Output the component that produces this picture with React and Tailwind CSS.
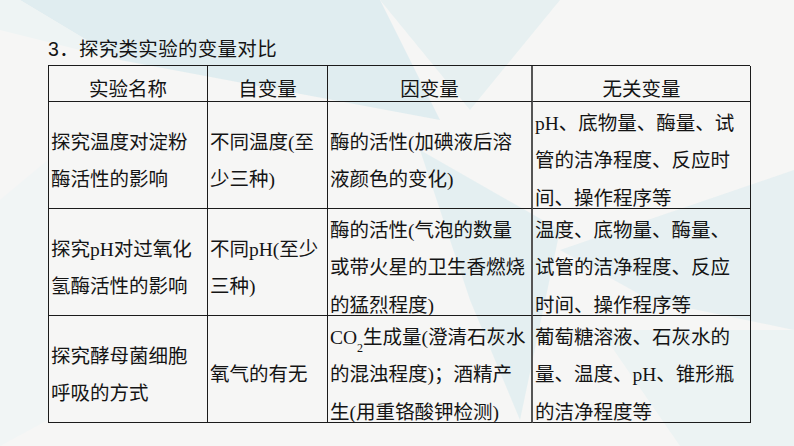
import React from 'react';

const serif = { fontFamily: '"Liberation Serif", "Noto Sans CJK SC", serif' };

const rows = [
  {
    name: ['探究温度对淀粉', '酶活性的影响'],
    iv: ['不同温度(至', '少三种)'],
    dv: ['酶的活性(加碘液后溶', '液颜色的变化)'],
    cv: ['pH、底物量、酶量、试', '管的洁净程度、反应时', '间、操作程序等'],
  },
  {
    name: ['探究pH对过氧化', '氢酶活性的影响'],
    iv: ['不同pH(至少', '三种)'],
    dv: ['酶的活性(气泡的数量', '或带火星的卫生香燃烧', '的猛烈程度)'],
    cv: ['温度、底物量、酶量、', '试管的洁净程度、反应', '时间、操作程序等'],
  },
  {
    name: ['探究酵母菌细胞', '呼吸的方式'],
    iv: ['氧气的有无'],
    dv: [
      <>CO<sub className="text-[12px] align-[-5px]">2</sub>生成量(澄清石灰水</>,
      '的混浊程度)；酒精产',
      '生(用重铬酸钾检测)',
    ],
    cv: ['葡萄糖溶液、石灰水的', '量、温度、pH、锥形瓶', '的洁净程度等'],
  },
];

function Cell({ lines, className = '' }) {
  return (
    <div className={`h-[107px] flex items-center pt-[12px] pl-[2px] border-b border-[#1b1b1b] whitespace-nowrap ${className}`}>
      <div className="leading-[37.5px]">
        {lines.map((l, i) => (
          <div key={i}>{l}</div>
        ))}
      </div>
    </div>
  );
}

function Background() {
  return (
    <svg className="absolute inset-0" width="794" height="446" viewBox="0 0 794 446">
      <rect width="794" height="446" fill="#f6f6f5" />
      <polygon points="20,0 380,0 440,120 120,60" fill="#dcebee" opacity="0.85" />
      <polygon points="0,0 20,0 120,60 0,30" fill="#eef4f4" />
      <polygon points="380,0 560,0 470,110" fill="#e7f0f1" />
      <polygon points="420,150 560,230 520,420 470,300" fill="#e0eef0" opacity="0.8" />
      <polygon points="560,250 794,170 794,330 650,300" fill="#e2eef0" opacity="0.75" />
      <polygon points="600,330 794,330 794,446 680,446" fill="#ecf3f3" />
      <polygon points="0,200 48,160 48,420 0,446" fill="#f1f5f5" />
    </svg>
  );
}

export default function App() {
  return (
    <div className="relative w-[794px] h-[446px] overflow-hidden text-[#141414]">
      <Background />
      <div className="relative pl-[48px] pt-[37px]">
        <div
          className="text-[19.5px] leading-[24px] tracking-[0.3px] mb-[4px]"
          style={{ fontFamily: '"Liberation Sans", "Noto Sans CJK SC", sans-serif' }}
        >
          3．探究类实验的变量对比
        </div>
        <div
          className="grid grid-cols-[159px_120px_205px_218px] w-[702px] border-l border-t border-[#1b1b1b] text-[19.5px]"
          style={serif}
        >
          {['实验名称', '自变量', '因变量', '无关变量'].map((h, i) => (
            <div
              key={h}
              className={`h-[36px] flex items-center justify-center pt-[12px] leading-[24px] border-b border-[#1b1b1b] ${
                i === 2 ? 'border-r-2 border-r-[#555]' : 'border-r border-r-[#1b1b1b]'
              }`}
            >
              {h}
            </div>
          ))}
          {rows.map((r, i) => (
            <React.Fragment key={i}>
              <Cell lines={r.name} className="border-r border-r-[#1b1b1b]" />
              <Cell lines={r.iv} className="border-r border-r-[#1b1b1b]" />
              <Cell lines={r.dv} className="border-r-2 border-r-[#555]" />
              <Cell lines={r.cv} className="border-r border-r-[#1b1b1b]" />
            </React.Fragment>
          ))}
        </div>
      </div>
    </div>
  );
}
